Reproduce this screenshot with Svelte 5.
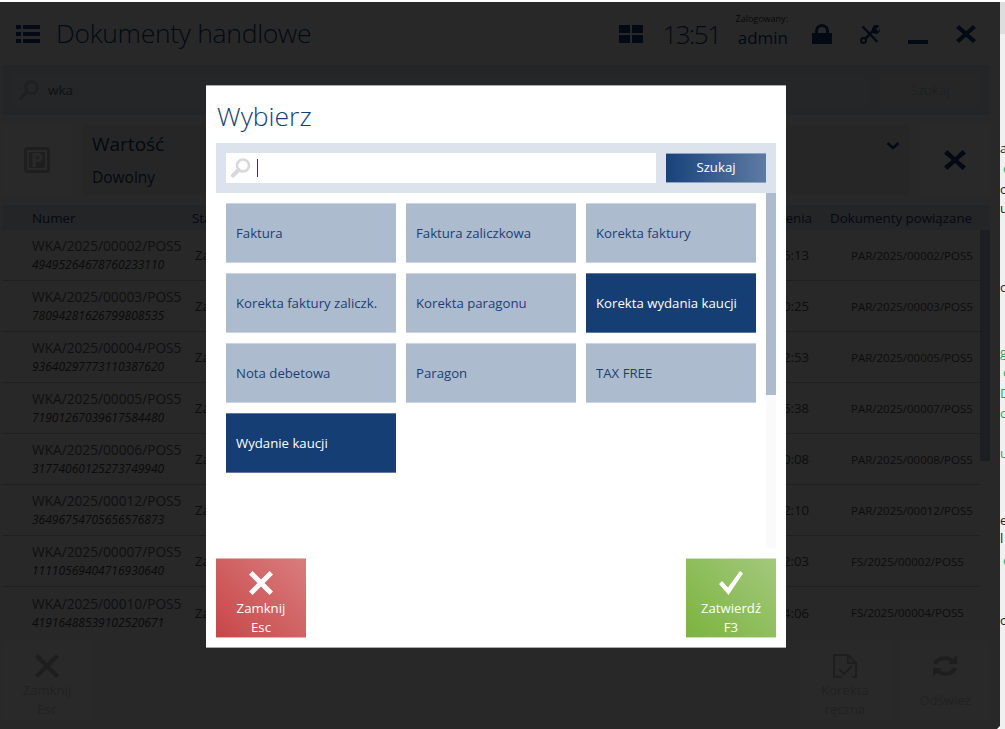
<script>
  const rows = [
    ["WKA/2025/00002/POS5", "49495264678760233110", "16:13", "PAR/2025/00002/POS5"],
    ["WKA/2025/00003/POS5", "78094281626799808535", "10:25", "PAR/2025/00003/POS5"],
    ["WKA/2025/00004/POS5", "93640297773110387620", "12:53", "PAR/2025/00005/POS5"],
    ["WKA/2025/00005/POS5", "71901267039617584480", "15:38", "PAR/2025/00007/POS5"],
    ["WKA/2025/00006/POS5", "31774060125273749940", "10:08", "PAR/2025/00008/POS5"],
    ["WKA/2025/00012/POS5", "36496754705656576873", "12:10", "PAR/2025/00012/POS5"],
    ["WKA/2025/00007/POS5", "11110569404716930640", "12:03", "FS/2025/00002/POS5"],
    ["WKA/2025/00010/POS5", "41916488539102520671", "14:06", "FS/2025/00004/POS5"]
  ];

  const docTypes = [
    { name: "Faktura" },
    { name: "Faktura zaliczkowa" },
    { name: "Korekta faktury" },
    { name: "Korekta faktury zaliczk." },
    { name: "Korekta paragonu" },
    { name: "Korekta wydania kaucji", active: true },
    { name: "Nota debetowa" },
    { name: "Paragon" },
    { name: "TAX FREE" },
    { name: "Wydanie kaucji", active: true }
  ];

  // bits of the page behind the window, only their first letters show
  const behind = [
    { text: "ag", top: 139 },
    { text: "c", top: 159, green: true, left: 3 },
    { text: "o", top: 180 },
    { text: "u", top: 199 },
    { text: "ou", top: 278 },
    { text: "g", top: 343, green: true },
    { text: "c", top: 363, green: true, left: 3 },
    { text: "D", top: 384, green: true },
    { text: "c", top: 404, green: true },
    { text: "ul", top: 444, green: true },
    { text: "e", top: 511 },
    { text: "l", top: 529 },
    { text: "c", top: 551, green: true, left: 3 },
    { text: "ou", top: 611 }
  ];
</script>

<div class="page">
  <div class="app">
    <header class="topbar">
      <svg class="menu-icon" viewBox="0 0 24 18">
        <path d="M0 0h5v4H0zM7 0h17v4H7zM0 7h5v4H0zM7 7h17v4H7zM0 14h5v4H0zM7 14h17v4H7z" />
      </svg>
      <h1>Dokumenty handlowe</h1>
      <svg class="tiles-icon" viewBox="0 0 24 18">
        <path d="M0 0h11v8H0zM13 0h11v8H13zM0 10h11v8H0zM13 10h11v8H13z" />
      </svg>
      <span class="clock">13:51</span>
      <div class="user">
        <small>Zalogowany:</small>
        <strong>admin</strong>
      </div>
      <svg class="bar-icon lock" viewBox="0 0 20 20">
        <path d="M0 9h3V7a7 7 0 0 1 14 0v2h3v11H0zM6 9h8V7a4 4 0 0 0-8 0z" />
      </svg>
      <svg class="bar-icon tools" viewBox="0 0 20 20">
        <path class="tool-line" d="M2.500 2.500 17.500 18" />
        <path class="tool-line" d="M13 7 5 15" />
        <circle class="tool-ring" cx="3.500" cy="16.500" r="2.500" />
        <path d="M12.500 3.500A4.500 4.500 0 0 1 19.500 2l-3 2.500.5 2 2 .5 1-3a4.500 4.500 0 0 1-6 5.500l-3-1z" />
      </svg>
      <svg class="bar-icon minimize" viewBox="0 0 20 20"><path d="M0 16h20v4H0z" /></svg>
      <svg class="bar-icon close" viewBox="0 0 20 18">
        <path d="M3 0l7 6.200L17 0l3 3-7 6 7 6-3 3-7-6.200L3 18l-3-3 7-6-7-6z" />
      </svg>
    </header>

    <div class="searchbar">
      <div class="search-field">
        <svg class="loupe" viewBox="0 0 20 20">
          <circle cx="12.500" cy="7.500" r="6" fill="none" stroke-width="2.500" />
          <path d="M8 12 1.500 18.500" stroke-width="3.500" stroke-linecap="round" fill="none" />
        </svg>
        <span>wka</span>
      </div>
      <button class="search-disabled">Szukaj</button>
    </div>

    <div class="filters">
      <div class="tile parking">
        <svg viewBox="0 0 26 26">
          <rect x="1.500" y="1.500" width="23" height="23" rx="2" fill="none" stroke-width="3" />
          <path class="solid" d="M5 5h16v16H5z" />
          <text x="13" y="20" text-anchor="middle">P</text>
        </svg>
      </div>
      <div class="value-filter">
        <div>
          <div class="filter-name">Wartość</div>
          <div class="filter-value">Dowolny</div>
        </div>
        <svg viewBox="0 0 14 9"><path d="M1.500 1 7 6l5.500-5" fill="none" stroke-width="2.500" /></svg>
      </div>
      <div class="tile clear">
        <svg viewBox="0 0 20 18">
          <path d="M3 0l7 6.200L17 0l3 3-7 6 7 6-3 3-7-6.200L3 18l-3-3 7-6-7-6z" />
        </svg>
      </div>
    </div>

    <div class="table-head">
      <span>Numer</span>
      <span>Status</span>
      <span class="date-head">Data wystawienia</span>
      <span class="related-head">Dokumenty powiązane</span>
    </div>
    <div class="table-body">
      <div class="rows">
        {#each rows as row}
          <div class="row">
            <div class="doc-number">
              <span>{row[0]}</span>
              <em>{row[1]}</em>
            </div>
            <span class="status">Zatwierdzony</span>
            <span class="date">2025-03-12 {row[2]}</span>
            <span class="related">{row[3]}</span>
          </div>
        {/each}
      </div>
      <div class="app-scroll"><div></div></div>
    </div>

    <footer class="bottombar">
      <div class="foot-btn">
        <svg viewBox="0 0 24 24">
          <path d="M3 0l9 9 9-9 3 3-9 9 9 9-3 3-9-9-9 9-3-3 9-9-9-9z" />
        </svg>
        <span>Zamknij<br />Esc</span>
      </div>
      <div class="spacer"></div>
      <div class="foot-btn">
        <svg viewBox="0 0 24 24">
          <path class="outline" d="M9 23H1V1h14l8 8v14h-4M15 1v8h8M6 15l5 5 8-8" />
        </svg>
        <span>Korekta<br />ręczna</span>
      </div>
      <div class="foot-btn">
        <svg viewBox="0 0 24 24">
          <path class="outline thick" d="M2 10a10 8 0 0 1 18-2M22 14a10 8 0 0 1-18 2" />
          <path d="M24 1v9h-9zM0 23v-9h9z" />
        </svg>
        <span>Odśwież</span>
      </div>
    </footer>

    <div class="overlay">
      <div class="modal">
        <h2>Wybierz</h2>
        <div class="modal-search">
          <div class="modal-input">
            <svg class="loupe-light" viewBox="0 0 20 20">
              <circle cx="12" cy="7.500" r="6" fill="none" stroke-width="2.500" />
              <path d="M7.500 12 2 17.500" stroke-width="4" stroke-linecap="round" fill="none" />
            </svg>
            <i class="caret"></i>
          </div>
          <button class="search-btn">Szukaj</button>
        </div>
        <div class="modal-list">
          <div class="grid">
            {#each docTypes as doc}
              <button class="doc" class:active={doc.active}>{doc.name}</button>
            {/each}
          </div>
          <div class="modal-scroll"><div></div></div>
        </div>
        <div class="modal-actions">
          <button class="action cancel">
            <svg viewBox="0 0 24 24">
              <path d="M3.500 0 12 8.500 20.500 0 24 3.500 15.500 12l8.500 8.500-3.500 3.500L12 15.500 3.500 24 0 20.500 8.500 12 0 3.500z" />
            </svg>
            <span>Zamknij<br />Esc</span>
          </button>
          <button class="action confirm">
            <svg viewBox="0 0 24 24">
              <path d="M0 13 3 10l6 6.500L21 0l3 2.500L9.500 24z" />
            </svg>
            <span>Zatwierdź<br />F3</span>
          </button>
        </div>
      </div>
    </div>
  </div>

  <aside class="behind">
    {#each behind as bit}
      <span class:green={bit.green} style="top: {bit.top}px; left: {bit.left ?? 0}px;">{bit.text}</span>
    {/each}
  </aside>
</div>

<style>
  :global(body) {
    background: #fff;
    overflow: hidden;
  }

  .page {
    display: flex;
    width: 1005px;
    height: 729px;
    padding-top: 2px;
    box-sizing: border-box;
    font-family: "Open Sans", "Noto Sans", sans-serif;
    overflow: hidden;
  }

  .app {
    position: relative;
    display: flex;
    flex-direction: column;
    width: 1000px;
    height: 727px;
    box-sizing: border-box;
    padding: 0 10px 8px 2px;
    background: #f5f5f5;
    color: #444;
    clip-path: polygon(0 0, 100% 0, 100% 724px, 997px 100%, 0 100%);
  }

  .behind {
    position: relative;
    width: 5px;
    margin-top: -2px;
    background: linear-gradient(to bottom, #fff 2px, #ddd 2px, #ddd 34px, #f0f0f0 34px);
    font-size: 13px;
    color: #222;
    overflow: hidden;
  }

  .behind span {
    position: absolute;
  }

  .behind .green {
    color: #1fa860;
  }

  /* header */
  .topbar {
    display: flex;
    align-items: center;
    height: 63px;
    flex: none;
    padding: 0 14px;
    color: #153e75;
  }

  .topbar svg,
  .tile svg,
  .value-filter svg {
    fill: #153e75;
    stroke: #153e75;
    stroke-width: 0;
    flex: none;
  }

  .menu-icon {
    width: 24px;
    height: 18px;
  }

  h1 {
    margin: 0 0 0 16px;
    font-size: 26.500px;
    font-weight: 300;
    line-height: 1;
    letter-spacing: -0.3px;
  }

  .tiles-icon {
    width: 24px;
    height: 18px;
    margin-left: auto;
  }

  .clock {
    margin-left: 19px;
    font-size: 26px;
    font-weight: 300;
    letter-spacing: -1.500px;
  }

  .user {
    display: flex;
    flex-direction: column;
    align-items: flex-end;
    margin-left: 15px;
    margin-top: -5px;
  }

  .user small {
    font-size: 9px;
    line-height: 12px;
    color: #333;
  }

  .user strong {
    font-size: 17px;
    line-height: 24px;
    font-weight: 400;
    margin-top: 1px;
  }

  .bar-icon {
    width: 20px;
    height: 20px;
    margin-left: 28px;
  }

  .bar-icon.lock {
    margin-left: 24px;
  }

  .bar-icon.close {
    height: 18px;
  }

  .topbar .tool-line {
    fill: none;
    stroke-width: 2.500px;
  }

  .topbar .tool-ring {
    fill: none;
    stroke-width: 2px;
  }

  /* search */
  .searchbar {
    display: flex;
    justify-content: space-between;
    align-items: center;
    gap: 10px;
    flex: none;
    height: 50px;
    padding: 0 10px;
    background: #dce3ec;
  }

  .search-field {
    display: flex;
    align-items: center;
    gap: 9px;
    flex: 1;
    height: 32px;
    padding-left: 7px;
    background: #e3e8ef;
    font-size: 13.500px;
    color: #666;
  }

  .loupe {
    width: 20px;
    height: 20px;
    stroke: #bcc4cd;
  }

  .search-disabled {
    width: 100px;
    height: 32px;
    border: 0;
    background: #e8ecf1;
    font: inherit;
    font-size: 13.200px;
    color: #c4c8cc;
  }

  /* filter row */
  .filters {
    display: flex;
    gap: 10px;
    flex: none;
    height: 70px;
    margin-top: 10px;
  }

  .tile {
    display: flex;
    align-items: center;
    justify-content: center;
    width: 70px;
    flex: none;
    background: #fff;
  }

  .parking svg {
    width: 26px;
    height: 26px;
    stroke: #bbb;
    fill: #bbb;
    stroke-width: 3;
  }

  .parking .solid {
    fill: #bbb;
    stroke: none;
  }

  .parking text {
    font-size: 20px;
    font-weight: 700;
    fill: #fff;
    stroke: none;
  }

  .clear svg {
    width: 22px;
    height: 20px;
  }

  .value-filter {
    display: flex;
    justify-content: space-between;
    flex: 1;
    padding: 6px 10px 0 10px;
    background: #e8e8e8;
    color: #153e75;
  }

  .filter-name {
    font-size: 19px;
    line-height: 27px;
  }

  .filter-value {
    font-size: 15.500px;
    line-height: 22px;
    margin-top: 8px;
  }

  .value-filter svg {
    width: 14px;
    height: 9px;
    margin-top: 11px;
    fill: none;
    stroke-width: 2.5;
  }

  /* table */
  .table-head {
    display: grid;
    grid-template-columns: 160px 500px 120px 1fr;
    align-items: center;
    flex: none;
    height: 25px;
    margin-top: 10px;
    padding-left: 30px;
    background: #dce3ec;
    font-size: 13.300px;
    color: #153e75;
    white-space: nowrap;
  }

  .date-head {
    text-align: right;
  }

  .related-head {
    padding-left: 18px;
  }

  .table-body {
    display: flex;
    flex: none;
    height: 408px;
  }

  .rows {
    flex: 1;
  }

  .row {
    display: grid;
    grid-template-columns: 160px 100px 517px 1fr;
    align-items: center;
    height: 51px;
    box-sizing: border-box;
    padding-left: 30px;
    border-bottom: 1px solid #c8c8c8;
    font-size: 13.200px;
    color: #555;
  }

  .row:last-child {
    border-bottom: 0;
  }

  .doc-number {
    display: flex;
    flex-direction: column;
    white-space: nowrap;
    font-size: 13.700px;
    line-height: 19px;
    color: #666;
  }

  .doc-number em {
    font-size: 12px;
    line-height: 19px;
    color: #444;
  }

  .status {
    padding-left: 3px;
  }

  .date {
    text-align: right;
    white-space: nowrap;
  }

  .related {
    padding-left: 42px;
    font-size: 11.500px;
    white-space: nowrap;
  }

  .app-scroll {
    width: 10px;
    background: #f5f5f5;
  }

  .app-scroll div {
    height: 231px;
    background: #adbbcf;
  }

  /* bottom bar */
  .bottombar {
    display: flex;
    gap: 10px;
    height: 80px;
    flex: none;
    margin-top: 3px;
  }

  .spacer {
    flex: 1;
  }

  .foot-btn {
    display: flex;
    flex-direction: column;
    align-items: center;
    width: 90px;
    padding-top: 13px;
    box-sizing: border-box;
    background: #fff;
    font-size: 13.200px;
    line-height: 19px;
    color: #cacaca;
    text-align: center;
  }

  .foot-btn svg {
    width: 24px;
    height: 24px;
    margin-bottom: 3px;
    fill: #b8b8b8;
    flex: none;
  }

  .foot-btn .outline {
    fill: none;
    stroke: #b8b8b8;
    stroke-width: 2;
  }

  .foot-btn .thick {
    stroke-width: 4;
  }

  .foot-btn:last-child span {
    margin-top: 10px;
  }

  /* dimmer + dialog */
  .overlay {
    position: absolute;
    inset: 0;
    padding: 83px 0 0 206px;
    background: rgba(0, 0, 0, 0.84);
  }

  .modal {
    display: flex;
    flex-direction: column;
    width: 580px;
    height: 563px;
    box-sizing: border-box;
    padding: 0 10px;
    background: #fff;
    border-top: 1px solid #aaa;
    border-bottom: 1px solid #aaa;
    color: #153e75;
  }

  h2 {
    margin: 0 0 0 1px;
    height: 57px;
    font-size: 26.500px;
    font-weight: 300;
    line-height: 61px;
  }

  .modal-search {
    display: flex;
    justify-content: space-between;
    align-items: center;
    height: 50px;
    flex: none;
    padding: 0 10px;
    background: #dce3ec;
  }

  .modal-input {
    display: flex;
    align-items: center;
    gap: 6px;
    width: 430px;
    height: 30px;
    padding-left: 5px;
    box-sizing: border-box;
    background: #fff;
  }

  .loupe-light {
    width: 20px;
    height: 20px;
    stroke: #d8d8d8;
  }

  .caret {
    width: 1px;
    height: 18px;
    background: #153e75;
  }

  .search-btn {
    width: 100px;
    height: 30px;
    padding: 0 0 2px;
    border: 0;
    border-top: 1px solid #8ea3c0;
    border-bottom: 1px solid #8ea3c0;
    background: linear-gradient(90deg, #17427b 0%, #5f7ba3 100%);
    color: #fff;
    font: inherit;
    font-size: 13.200px;
  }

  .modal-list {
    display: flex;
    justify-content: space-between;
    height: 355px;
    flex: none;
  }

  .grid {
    display: grid;
    grid-template-columns: repeat(3, 170px);
    grid-template-rows: repeat(4, 60px);
    gap: 10px;
    padding: 10px 0 0 10px;
  }

  .doc {
    padding: 0 0 1px 10px;
    border: 0;
    border-top: 1px solid #cbd5e2;
    border-bottom: 1px solid #cbd5e2;
    background: #adbbcf;
    color: #1b3f73;
    font: inherit;
    font-size: 13.200px;
    text-align: left;
    white-space: nowrap;
  }

  .doc.active {
    background: #153e75;
    border-top-color: #5f7ba3;
    border-bottom-color: #5f7ba3;
    color: #fff;
  }

  .modal-scroll {
    width: 10px;
    background: #fafafa;
  }

  .modal-scroll div {
    height: 202px;
    background: #adbbcf;
  }

  .modal-actions {
    display: flex;
    justify-content: space-between;
    margin-top: 10px;
  }

  .action {
    display: flex;
    flex-direction: column;
    align-items: center;
    width: 90px;
    height: 80px;
    padding: 12px 0 0;
    box-sizing: border-box;
    border: 0;
    border-top: 1px solid;
    border-bottom: 1px solid;
    color: #fff;
    font: inherit;
    font-size: 13.200px;
    line-height: 19px;
  }

  .action svg {
    width: 24px;
    height: 24px;
    margin-bottom: 4px;
    fill: #fff;
    flex: none;
  }

  .cancel {
    background: linear-gradient(45deg, #c84648 0%, #d97d7d 100%);
    border-color: #e9b0b0;
  }

  .confirm {
    background: linear-gradient(45deg, #7bb33f 0%, #a3c97c 100%);
    border-color: #cfe2bb;
  }
</style>
